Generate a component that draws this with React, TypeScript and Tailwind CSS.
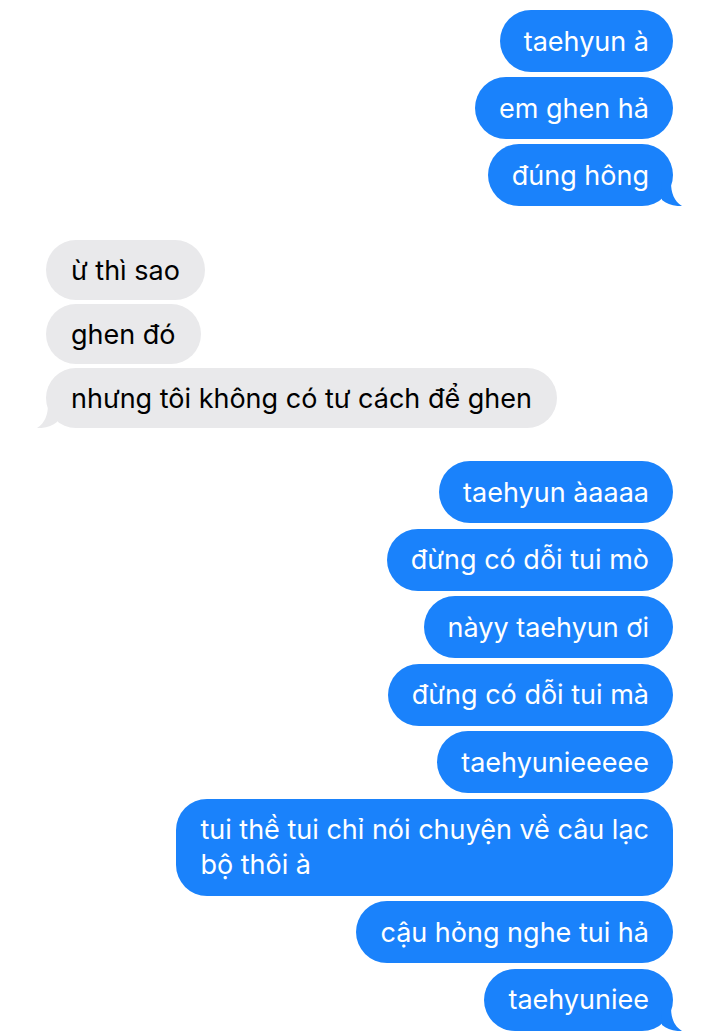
import React from "react";

const BLUE = "#1a82fb";

function TailRight() {
  return (
    <svg className="absolute bottom-0 right-[-10px]" width="22" height="24" viewBox="0 0 22 24">
      <path d="M0 0 H10 C10 11 13 19 21 24 C12 24.5 6 22 1 18 Z" fill={BLUE} />
    </svg>
  );
}

function TailLeft() {
  return (
    <svg className="absolute bottom-0 left-[-10px]" width="22" height="24" viewBox="0 0 22 24">
      <path d="M22 0 H12 C12 11 9 19 1 24 C10 24.5 16 22 21 18 Z" fill="#e9e9eb" />
    </svg>
  );
}

function Blue({ children, tail }: { children: React.ReactNode; tail?: boolean }) {
  return (
    <div className="relative self-end w-fit rounded-[31px] bg-[#1a82fb] px-[24px] py-[13.5px] text-[27px] leading-[35px] text-white">
      {children}
      {tail && <TailRight />}
    </div>
  );
}

function Gray({ children, tail }: { children: React.ReactNode; tail?: boolean }) {
  return (
    <div className="relative self-start w-fit rounded-[30px] bg-[#e9e9eb] px-[25px] py-[12.5px] text-[27px] leading-[35px] text-black">
      {children}
      {tail && <TailLeft />}
    </div>
  );
}

export default function App() {
  return (
    <div
      className="min-h-[1031px] w-[719px] bg-white px-[46px] pt-[10px]"
      style={{ fontFamily: "Inter, 'Noto Sans', sans-serif" }}
    >
      <div className="flex flex-col gap-[5px]">
        <Blue>taehyun à</Blue>
        <Blue>em ghen hả</Blue>
        <Blue tail>đúng hông</Blue>
      </div>
      <div className="mt-[34px] flex flex-col gap-[4px]">
        <Gray>ừ thì sao</Gray>
        <Gray>ghen đó</Gray>
        <Gray tail>nhưng tôi không có tư cách để ghen</Gray>
      </div>
      <div className="mt-[33px] flex flex-col gap-[5.5px]">
        <Blue>taehyun àaaaa</Blue>
        <Blue>đừng có dỗi tui mò</Blue>
        <Blue>nàyy taehyun ơi</Blue>
        <Blue>đừng có dỗi tui mà</Blue>
        <Blue>taehyunieeeee</Blue>
        <Blue>
          tui thề tui chỉ nói chuyện về câu lạc
          <br />
          bộ thôi à
        </Blue>
        <Blue>cậu hỏng nghe tui hả</Blue>
        <Blue tail>taehyuniee</Blue>
      </div>
    </div>
  );
}
